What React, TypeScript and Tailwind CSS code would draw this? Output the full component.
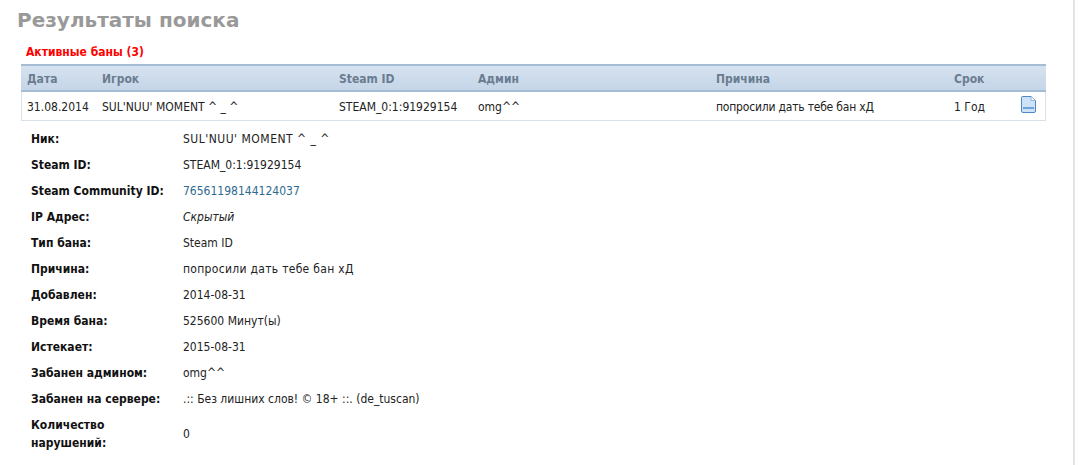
const details: { label: string; value: string; className?: string }[] = [
  { label: "Ник:", value: "SUL'NUU' MOMENT ^ _ ^", className: "tracking-[0.5px]" },
  { label: "Steam ID:", value: "STEAM_0:1:91929154" },
  { label: "Steam Community ID:", value: "76561198144124037", className: "text-[#2d6a8e]" },
  { label: "IP Адрес:", value: "Скрытый", className: "italic" },
  { label: "Тип бана:", value: "Steam ID" },
  { label: "Причина:", value: "попросили дать тебе бан хД", className: "tracking-[0.3px]" },
  { label: "Добавлен:", value: "2014-08-31" },
  { label: "Время бана:", value: "525600 Минут(ы)" },
  { label: "Истекает:", value: "2015-08-31" },
  { label: "Забанен админом:", value: "omg^^" },
  { label: "Забанен на сервере:", value: ".:: Без лишних слов! © 18+ ::. (de_tuscan)" },
  { label: "Количество нарушений:", value: "0" },
];

const columns = "grid grid-cols-[75px_237px_139px_238px_238px_67px_1fr] items-center";

function DocIcon() {
  return (
    <svg width="15" height="17" viewBox="0 0 15 17">
      <path d="M1.5 0.5H10L14.5 4.5V15a1.5 1.5 0 0 1-1.5 1.5H2A1.5 1.5 0 0 1 0.5 15V1.5a1 1 0 0 1 1-1z" fill="#cfe1f5" stroke="#4f86c6" />
      <path d="M10 0.5V4.5H14.5" fill="#f4f8fd" stroke="#8fb4dd" />
      <rect x="2" y="11" width="11" height="2" fill="#6ea3dc" />
    </svg>
  );
}

export default function App() {
  return (
    <div className="w-[1075px] h-[465px] overflow-hidden bg-white border-r-2 border-[#e4e4e4] font-['DejaVu_Sans_Condensed','DejaVu_Sans',sans-serif] [font-stretch:condensed] text-[12px] text-[#222]">
      <h1 className="pl-[17px] pt-[7px] h-[44px] font-['DejaVu_Sans',sans-serif] [font-stretch:normal] font-bold text-[20px] leading-[26px] text-[#999]">
        Результаты поиска
      </h1>
      <div className="pl-[26px] h-[16px] leading-[16px] font-bold text-[#f00]">Активные баны (3)</div>
      <div className="ml-[21px] mr-[27px] mt-[4px]">
        <div className={`${columns} h-[28px] pl-[6px] pt-[1px] border-y-2 border-[#a5bcd3] bg-gradient-to-b from-[#d5e2ef] to-[#c5d6e8] font-bold text-[#6b7c90]`}>
          <span>Дата</span>
          <span>Игрок</span>
          <span>Steam ID</span>
          <span>Админ</span>
          <span>Причина</span>
          <span>Срок</span>
        </div>
        <div className={`${columns} h-[29px] pl-[5px] pt-[1px] border-x border-b border-[#d8e0ea]`}>
          <span>31.08.2014</span>
          <span>SUL'NUU' MOMENT ^ _ ^</span>
          <span>STEAM_0:1:91929154</span>
          <span>omg^^</span>
          <span className="tracking-[-0.2px]">попросили дать тебе бан хД</span>
          <span>1 Год</span>
          <span className="-mt-[5px]">
            <DocIcon />
          </span>
        </div>
      </div>
      <div className="mt-[5px] pl-[31px]">
        {details.map((d) => (
          <div key={d.label} className="grid grid-cols-[152px_1fr] items-center py-[4px]">
            <span className="font-bold leading-[18px] text-[#111]">
              {d.label === "Количество нарушений:" ? (
                <>
                  Количество
                  <br />
                  нарушений:
                </>
              ) : (
                d.label
              )}
            </span>
            <span className={`leading-[18px] ${d.className ?? ""}`}>{d.value}</span>
          </div>
        ))}
      </div>
    </div>
  );
}
